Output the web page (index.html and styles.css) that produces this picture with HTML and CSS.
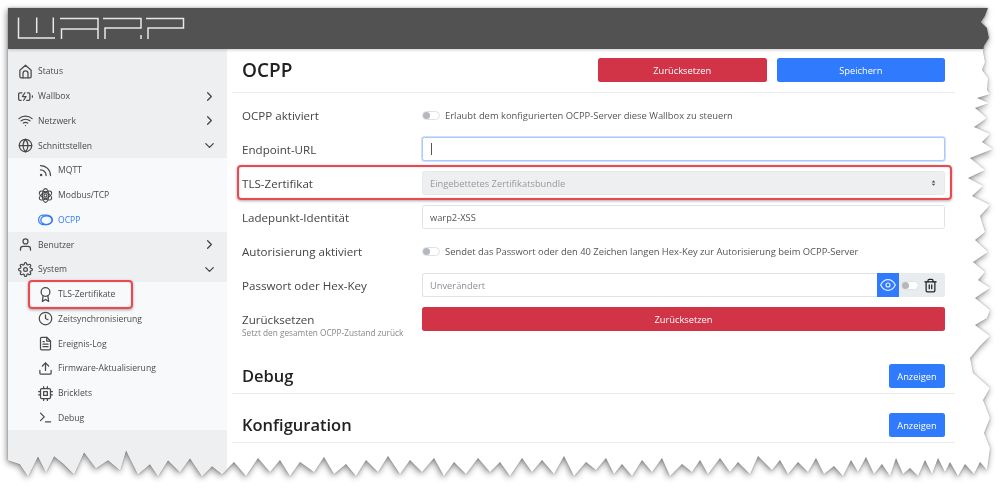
FILE: index.html
```html
<!DOCTYPE html>
<html lang="de">
<head>
  <meta charset="UTF-8">
  <meta name="viewport" content="width=device-width, initial-scale=1.0">
  <title>WARP</title>
  <link rel="stylesheet" href="styles.css">
</head>
<body>
  <div class="frame">
    <div class="sheet">
      <header class="topbar">
        <svg class="logo" width="180" height="41" viewBox="0 0 180 41" fill="none" stroke="#e8e8e8" stroke-width="1.5">
          <path d="M2.5 9.5V30H39M20.7 9.5V25M37.3 9.5V25"/>
          <path d="M45.5 31V21H82V31M44 10.5H82V21"/>
          <path d="M87 10.5H125V20H89V31M125 27V31"/>
          <path d="M132 31V20H167.5V10.5H130"/>
        </svg>
      </header>
      <div class="layout">
        <nav class="sidebar">
          <a class="nav-item">
            <svg class="icon" viewBox="0 0 24 24"><path d="M3 10l9-8 9 8v10a2 2 0 0 1-2 2H5a2 2 0 0 1-2-2z"/><path d="M8 22v-7a4 4 0 0 1 8 0v7"/></svg>
            Status
          </a>
          <a class="nav-item">
            <svg class="icon" viewBox="0 0 24 24"><path d="M5 18H3a2 2 0 0 1-2-2V8a2 2 0 0 1 2-2h3.19M15 6h2a2 2 0 0 1 2 2v8a2 2 0 0 1-2 2h-3.19"/><line x1="23" y1="13" x2="23" y2="11"/><polyline points="11 6 7 12 13 12 9 18"/></svg>
            Wallbox
            <svg class="chevron" viewBox="0 0 24 24"><polyline points="9 18 15 12 9 6"/></svg>
          </a>
          <a class="nav-item">
            <svg class="icon" viewBox="0 0 24 24"><path d="M5 12.55a11 11 0 0 1 14.08 0"/><path d="M1.42 9a16 16 0 0 1 21.16 0"/><path d="M8.53 16.11a6 6 0 0 1 6.95 0"/><line x1="12" y1="20" x2="12.01" y2="20"/></svg>
            Netzwerk
            <svg class="chevron" viewBox="0 0 24 24"><polyline points="9 18 15 12 9 6"/></svg>
          </a>
          <a class="nav-item">
            <svg class="icon" viewBox="0 0 24 24"><circle cx="12" cy="12" r="10"/><line x1="2" y1="12" x2="22" y2="12"/><path d="M12 2a15.3 15.3 0 0 1 4 10 15.3 15.3 0 0 1-4 10 15.3 15.3 0 0 1-4-10 15.3 15.3 0 0 1 4-10z"/></svg>
            Schnittstellen
            <svg class="chevron" viewBox="0 0 24 24"><polyline points="6 9 12 15 18 9"/></svg>
          </a>
          <div class="nav-sub">
            <a class="nav-item">
              <svg class="icon" viewBox="0 0 24 24"><path d="M4 11a9 9 0 0 1 9 9"/><path d="M4 4a16 16 0 0 1 16 16"/><circle cx="5" cy="19" r="1"/></svg>
              MQTT
            </a>
            <a class="nav-item">
              <svg class="icon" viewBox="0 0 24 24"><circle cx="12" cy="12" r="2.5"/><ellipse cx="12" cy="12" rx="5" ry="11"/><ellipse cx="12" cy="12" rx="5" ry="11" transform="rotate(60 12 12)"/><ellipse cx="12" cy="12" rx="5" ry="11" transform="rotate(120 12 12)"/></svg>
              Modbus/TCP
            </a>
            <a class="nav-item is-active">
              <svg class="icon" viewBox="0 0 24 24"><path d="M8 5h6a9 7.500 0 0 1 0 15H8a7 7.500 0 0 1 0-15z"/><ellipse cx="13.500" cy="13" rx="9" ry="7"/></svg>
              OCPP
            </a>
          </div>
          <a class="nav-item">
            <svg class="icon" viewBox="0 0 24 24"><path d="M20 21v-2a4 4 0 0 0-4-4H8a4 4 0 0 0-4 4v2"/><circle cx="12" cy="7" r="4"/></svg>
            Benutzer
            <svg class="chevron" viewBox="0 0 24 24"><polyline points="9 18 15 12 9 6"/></svg>
          </a>
          <a class="nav-item">
            <svg class="icon" viewBox="0 0 24 24"><circle cx="12" cy="12" r="3"/><path d="M19.4 15a1.65 1.65 0 0 0 .33 1.82l.06.06a2 2 0 0 1 0 2.83 2 2 0 0 1-2.83 0l-.06-.06a1.65 1.65 0 0 0-1.82-.33 1.65 1.65 0 0 0-1 1.51V21a2 2 0 0 1-2 2 2 2 0 0 1-2-2v-.09A1.65 1.65 0 0 0 9 19.4a1.65 1.65 0 0 0-1.82.33l-.06.06a2 2 0 0 1-2.83 0 2 2 0 0 1 0-2.83l.06-.06a1.65 1.65 0 0 0 .33-1.82 1.65 1.65 0 0 0-1.51-1H3a2 2 0 0 1-2-2 2 2 0 0 1 2-2h.09A1.65 1.65 0 0 0 4.600 9a1.65 1.65 0 0 0-.33-1.82l-.06-.06a2 2 0 0 1 0-2.83 2 2 0 0 1 2.83 0l.06.06a1.65 1.65 0 0 0 1.82.33H9a1.65 1.65 0 0 0 1-1.51V3a2 2 0 0 1 2-2 2 2 0 0 1 2 2v.09a1.65 1.65 0 0 0 1 1.51 1.65 1.65 0 0 0 1.82-.33l.06-.06a2 2 0 0 1 2.83 0 2 2 0 0 1 0 2.83l-.06.06a1.65 1.65 0 0 0-.33 1.82V9a1.65 1.65 0 0 0 1.51 1H21a2 2 0 0 1 2 2 2 2 0 0 1-2 2h-.09a1.65 1.65 0 0 0-1.51 1z"/></svg>
            System
            <svg class="chevron" viewBox="0 0 24 24"><polyline points="6 9 12 15 18 9"/></svg>
          </a>
          <div class="nav-sub">
            <a class="nav-item is-marked">
              <svg class="icon" viewBox="0 0 24 24"><circle cx="12" cy="8" r="7"/><polyline points="8.210 13.890 7 23 12 20 17 23 15.790 13.880"/></svg>
              TLS-Zertifikate
            </a>
            <a class="nav-item">
              <svg class="icon" viewBox="0 0 24 24"><circle cx="12" cy="12" r="10"/><polyline points="12 6 12 12 16 14"/></svg>
              Zeitsynchronisierung
            </a>
            <a class="nav-item">
              <svg class="icon" viewBox="0 0 24 24"><path d="M14 2H6a2 2 0 0 0-2 2v16a2 2 0 0 0 2 2h12a2 2 0 0 0 2-2V8z"/><polyline points="14 2 14 8 20 8"/><line x1="16" y1="13" x2="8" y2="13"/><line x1="16" y1="17" x2="8" y2="17"/><polyline points="10 9 9 9 8 9"/></svg>
              Ereignis-Log
            </a>
            <a class="nav-item">
              <svg class="icon" viewBox="0 0 24 24"><path d="M21 15v4a2 2 0 0 1-2 2H5a2 2 0 0 1-2-2v-4"/><polyline points="17 8 12 3 7 8"/><line x1="12" y1="3" x2="12" y2="15"/></svg>
              Firmware-Aktualisierung
            </a>
            <a class="nav-item">
              <svg class="icon" viewBox="0 0 24 24"><rect x="4" y="4" width="16" height="16" rx="2"/><rect x="9" y="9" width="6" height="6"/><path d="M9 1v3M15 1v3M9 20v3M15 20v3M20 9h3M20 14h3M1 9h3M1 14h3"/></svg>
              Bricklets
            </a>
            <a class="nav-item">
              <svg class="icon" viewBox="0 0 24 24"><polyline points="4 17 10 11 4 5"/><line x1="12" y1="19" x2="20" y2="19"/></svg>
              Debug
            </a>
          </div>
        </nav>

        <main class="content">
          <section class="page-head">
            <h2 class="page-title">OCPP</h2>
            <div class="head-actions">
              <button class="btn btn-danger">Zurücksetzen</button>
              <button class="btn btn-primary">Speichern</button>
            </div>
          </section>

          <form class="form">
            <div class="form-row">
              <label>OCPP aktiviert</label>
              <div class="check-line">
                <span class="switch"></span>
                Erlaubt dem konfigurierten OCPP-Server diese Wallbox zu steuern
              </div>
            </div>
            <div class="form-row">
              <label for="endpoint">Endpoint-URL</label>
              <input class="field is-focused" id="endpoint" type="text">
            </div>
            <div class="form-row is-marked">
              <label for="cert">TLS-Zertifikat</label>
              <select class="field field-select" id="cert" disabled>
                <option>Eingebettetes Zertifikatsbundle</option>
              </select>
            </div>
            <div class="form-row">
              <label for="chargepoint">Ladepunkt-Identität</label>
              <input class="field" id="chargepoint" type="text" value="warp2-XSS">
            </div>
            <div class="form-row">
              <label>Autorisierung aktiviert</label>
              <div class="check-line">
                <span class="switch"></span>
                Sendet das Passwort oder den 40 Zeichen langen Hex-Key zur Autorisierung beim OCPP-Server
              </div>
            </div>
            <div class="form-row">
              <label for="secret">Passwort oder Hex-Key</label>
              <div class="input-group">
                <input class="field" id="secret" type="text" placeholder="Unverändert">
                <span class="eye-btn">
                  <svg class="icon" viewBox="0 0 24 24"><path d="M1 12s4-8 11-8 11 8 11 8-4 8-11 8-11-8-11-8z"/><circle cx="12" cy="12" r="3"/></svg>
                </span>
                <span class="append">
                  <span class="switch"></span>
                  <svg class="icon" viewBox="0 0 24 24"><polyline points="3 6 5 6 21 6"/><path d="M19 6v14a2 2 0 0 1-2 2H7a2 2 0 0 1-2-2V6m3 0V4a2 2 0 0 1 2-2h4a2 2 0 0 1 2 2v2"/><line x1="10" y1="11" x2="10" y2="17"/><line x1="14" y1="11" x2="14" y2="17"/></svg>
                </span>
              </div>
            </div>
            <div class="form-row">
              <label>Zurücksetzen<small>Setzt den gesamten OCPP-Zustand zurück</small></label>
              <button class="btn btn-danger" type="button">Zurücksetzen</button>
            </div>
          </form>

          <section class="fold-head fold-first">
            <h2>Debug</h2>
            <button class="btn btn-primary btn-small">Anzeigen</button>
          </section>
          <section class="fold-head">
            <h2>Konfiguration</h2>
            <button class="btn btn-primary btn-small">Anzeigen</button>
          </section>
        </main>
      </div>
    </div>
  </div>
</body>
</html>
```

FILE: styles.css
```css
* {
  margin: 0;
  padding: 0;
  box-sizing: border-box;
}

html, body {
  height: 488px;
  overflow: hidden;
  background-color: #fff;
}

body {
  padding: 8px 0 0 8px;
  font-family: "Open Sans", "Noto Sans", sans-serif;
  color: #333;
}

/* torn paper edge comes from the clip, the shadow from the parent */
.frame {
  width: 984px;
  height: 472px;
  filter: drop-shadow(0 0 1px rgba(0, 0, 0, .25)) drop-shadow(-1px 2px 3px rgba(0, 0, 0, .45));
}

.sheet {
  display: flex;
  flex-direction: column;
  width: 984px;
  height: 472px;
  background-color: #fff;
  clip-path: polygon(0 0, 980px 0, 977px 8px, 973px 14px, 979px 20px, 981px 30px, 976px 38px, 975px 44px, 977px 54px, 974px 62px, 980px 70px, 979px 82px, 982px 86px, 969px 90px, 981px 95px, 967px 100px, 979px 110px, 966px 119px, 982px 126px, 974px 134px, 985px 141px, 962px 150px, 977px 162px, 960px 170px, 975px 178px, 964px 188px, 982px 197px, 972px 208px, 977px 224px, 967px 232px, 980px 244px, 965px 254px, 977px 264px, 970px 272px, 982px 280px, 967px 290px, 982px 302px, 979px 310px, 967px 317px, 982px 328px, 972px 338px, 962px 350px, 965px 365px, 982px 380px, 975px 392px, 982px 410px, 976px 425px, 982px 440px, 979px 462px, 972px 454px, 966px 466px, 957px 456px, 950px 468px, 942px 454px, 937px 464px, 930px 450px, 924px 466px, 917px 452px, 910px 468px, 902px 460px, 895px 466px, 888px 450px, 882px 468px, 874px 456px, 866px 466px, 858px 449px, 850px 464px, 843px 452px, 835px 468px, 826px 458px, 816px 466px, 808px 450px, 800px 464px, 790px 454px, 780px 466px, 772px 452px, 764px 462px, 750px 448px, 742px 466px, 730px 454px, 722px 464px, 712px 450px, 700px 466px, 692px 452px, 684px 464px, 674px 456px, 662px 468px, 654px 450px, 644px 464px, 634px 452px, 624px 468px, 614px 456px, 606px 466px, 598px 450px, 588px 462px, 578px 454px, 566px 468px, 556px 448px, 546px 466px, 534px 452px, 524px 464px, 514px 450px, 502px 468px, 492px 454px, 482px 464px, 470px 450px, 458px 466px, 446px 454px, 436px 468px, 426px 450px, 414px 464px, 402px 452px, 392px 466px, 380px 448px, 370px 464px, 358px 452px, 348px 468px, 338px 456px, 326px 466px, 316px 449px, 306px 464px, 292px 454px, 282px 468px, 272px 452px, 262px 464px, 250px 450px, 238px 468px, 226px 454px, 214px 466px, 204px 458px, 194px 468px, 182px 450px, 172px 464px, 160px 452px, 150px 468px, 142px 456px, 130px 466px, 118px 442px, 112px 462px, 100px 452px, 88px 460px, 76px 444px, 66px 466px, 56px 456px, 46px 448px, 38px 464px, 30px 448px, 20px 468px, 12px 456px, 0 452px);
}

.topbar {
  position: relative;
  flex: none;
  height: 41px;
  padding-left: 8px;
  background-color: #525252;
  box-shadow: 0 1px 3px rgba(0, 0, 0, .2);
}

.logo {
  display: block;
}

.layout {
  flex: 1;
  display: grid;
  grid-template-columns: 219px 1fr;
  min-height: 0;
}

.icon, .chevron {
  flex: none;
  fill: none;
  stroke: currentColor;
  stroke-width: 2;
  stroke-linecap: round;
  stroke-linejoin: round;
}

/* sidebar */
.sidebar {
  padding-top: 10px;
  background-color: #eeeff1;
  font-size: 8.600px;
}

.nav-item {
  position: relative;
  display: flex;
  align-items: center;
  height: 24.75px;
  padding-left: 10px;
  color: #4a4a4a;
}

.nav-item .icon {
  width: 15px;
  height: 15px;
  margin-right: 5px;
}

.nav-item .chevron {
  width: 15px;
  height: 15px;
  margin-left: auto;
  margin-right: 10px;
  color: #444;
}

.nav-sub {
  background-color: #f8f9fa;
}

.nav-sub .nav-item {
  padding-left: 30px;
}

.nav-item.is-active {
  color: #307bfd;
}

.nav-item.is-marked::after,
.form-row.is-marked::after {
  content: "";
  position: absolute;
  border: 2px solid #ea4a4f;
  border-radius: 4px;
  box-shadow: 0 1px 3px rgba(0, 0, 0, .35), inset 0 0 2px rgba(0, 0, 0, .2);
  pointer-events: none;
}

.nav-item.is-marked::after {
  top: -2px;
  bottom: -2px;
  left: 20px;
  width: 101px;
}

/* main column */
.content {
  padding: 0 37px 0 5px;
}

.page-head, .fold-head {
  display: flex;
  align-items: center;
  justify-content: space-between;
  padding: 9px 10px 10px 10px;
  border-bottom: 1px solid #e9ebed;
}

h2 {
  font-size: 16.500px;
  line-height: 24px;
  font-weight: 600;
  color: #222;
}

.page-title {
  font-size: 19px;
}

.head-actions {
  display: flex;
  gap: 10px;
  width: 347px;
}

.head-actions .btn {
  flex: 1;
}

.btn {
  height: 24px;
  border: none;
  border-radius: 2.500px;
  font-family: inherit;
  font-size: 9.300px;
  color: #fff;
}

.btn-danger {
  background-color: #d13447;
}

.btn-primary {
  background-color: #307bfd;
}

.btn-small {
  width: 56px;
}

.form {
  display: flex;
  flex-direction: column;
  gap: 10px;
  padding: 10px 10px 0;
}

.form-row {
  position: relative;
  display: grid;
  grid-template-columns: 180px 1fr;
  align-items: center;
  height: 24px;
}

.form-row.is-marked::after {
  top: -6px;
  bottom: -5px;
  left: -5px;
  right: -7px;
}

.form-row label {
  position: relative;
  font-size: 11.600px;
  color: #444;
}

.form-row small {
  position: absolute;
  top: 100%;
  left: 0;
  font-size: 8.250px;
  color: #888;
  white-space: nowrap;
}

.check-line {
  display: flex;
  align-items: center;
  gap: 5px;
  font-size: 9.400px;
  color: #555;
}

.switch {
  flex: none;
  display: block;
  position: relative;
  width: 18px;
  height: 9px;
  border: 1px solid #dee2e6;
  border-radius: 5px;
  background-color: #fff;
}

.switch::before {
  content: "";
  position: absolute;
  top: 0;
  left: 0;
  width: 7px;
  height: 7px;
  border-radius: 50%;
  background-color: #b4b8bd;
}

.field {
  width: 100%;
  height: 24px;
  padding: 0 7px;
  border: 1px solid #dfe3e7;
  border-radius: 2.500px;
  background-color: #fff;
  font-family: inherit;
  font-size: 9.300px;
  color: #555;
  outline: none;
}

.field::placeholder {
  color: #8a8f96;
}

.field.is-focused {
  border-color: #a9c8fb;
  box-shadow: 0 0 0 1px #cfe0fd;
  background: linear-gradient(#555, #555) 8px center / 1px 12px no-repeat #fff;
}

.field-select {
  appearance: none;
  border-color: #e6e8ea;
  background: #eeeff1 url("data:image/svg+xml,%3Csvg xmlns='http://www.w3.org/2000/svg' viewBox='0 0 8 12'%3E%3Cpath fill='%23555' d='M1 5l3-3.500L7 5zM1 7l3 3.500L7 7z'/%3E%3C/svg%3E") no-repeat right 8px center / 5px 8px;
  color: #999;
  opacity: 1;
}

.input-group {
  display: flex;
  height: 24px;
}

.input-group .field {
  flex: 1;
  min-width: 0;
  border-right: none;
  border-radius: 2.500px 0 0 2.500px;
}

.eye-btn {
  display: flex;
  align-items: center;
  justify-content: center;
  width: 22px;
  background-color: #307bfd;
  color: #fff;
}

.eye-btn .icon {
  width: 16px;
  height: 16px;
  stroke-width: 1.800;
  color: #e4eeff;
}

.append {
  display: flex;
  align-items: center;
  gap: 4px;
  width: 46px;
  padding-left: 2px;
  border-radius: 0 2.500px 2.500px 0;
  background-color: #e9ecef;
}

.append .icon {
  width: 15px;
  height: 15px;
  color: #222;
}

.fold-head {
  padding: 0 10px 5px;
}

.fold-first {
  margin-top: 33px;
}

.fold-head + .fold-head {
  margin-top: 19px;
}
```
